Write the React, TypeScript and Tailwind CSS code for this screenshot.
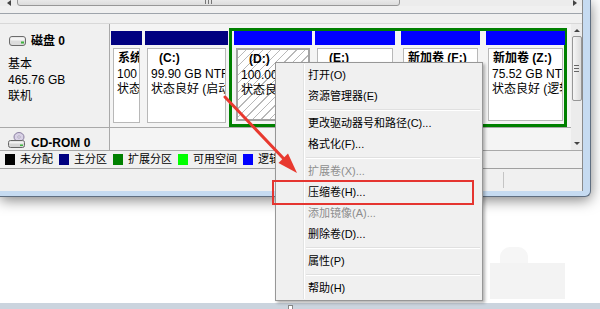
import React from 'react'

const FONT = "font-['Liberation_Sans','Noto_Sans_CJK_SC',sans-serif]"

function DiskIcon() {
  return (
    <svg width="17" height="10" viewBox="0 0 17 10">
      <rect x="0.5" y="0.5" width="16" height="9" rx="2.5" fill="#dcdcdc" stroke="#6b6b6b" />
      <rect x="1.5" y="1.5" width="14" height="3" rx="1" fill="#f4f4f4" />
      <rect x="12" y="5.5" width="3" height="2" fill="#3fb53f" />
    </svg>
  )
}

function CdIcon() {
  return (
    <svg width="18" height="16" viewBox="0 0 18 16">
      <ellipse cx="11" cy="5" rx="5" ry="4.5" fill="#d9d2e6" stroke="#8a7fa0" />
      <circle cx="11" cy="5" r="1.2" fill="#fff" stroke="#8a7fa0" strokeWidth="0.6" />
      <rect x="0.5" y="8.5" width="16" height="7" rx="2" fill="#d6d6d6" stroke="#666" />
      <rect x="1.5" y="9.5" width="14" height="2" fill="#f2f2f2" />
      <rect x="12" y="12.5" width="3" height="1.5" fill="#3fb53f" />
    </svg>
  )
}

type Part = {
  w: string
  header: string
  name: string
  size: string
  status: string
  hatched?: boolean
  indent?: boolean
}

function Partition({ p, inExtended }: { p: Part; inExtended?: boolean }) {
  return (
    <div className={`${p.w} ${inExtended ? '' : 'mt-[7px]'} flex flex-col`}>
      <div className={`h-[14px] ${p.header}`} />
      <div className="px-[2px] pt-[3px]">
        <div
          className={`${inExtended ? 'h-[73px]' : 'h-[75px]'} overflow-hidden whitespace-nowrap pl-[3px] pt-[2px] text-[12px] leading-[15.5px] text-black ${
            p.hatched
              ? 'border-2 border-[#a3a3a3] bg-[repeating-linear-gradient(135deg,#ffffff_0px,#ffffff_5px,#b9b9b9_5px,#b9b9b9_6px)]'
              : 'border border-[#b8b8b8] bg-white'
          }`}
        >
          <div className={`font-bold ${p.indent ? 'pl-[8px]' : 'pl-[1px]'}`}>{p.name}</div>
          <div>{p.size}</div>
          <div>{p.status}</div>
        </div>
      </div>
    </div>
  )
}

const logical: Part[] = [
  { w: 'w-[78px]', header: 'bg-[#0000ff]', name: '(D:)', size: '100.00 GB NTFS', status: '状态良好 (逻辑驱动器)', hatched: true, indent: true },
  { w: 'w-[80px]', header: 'bg-[#0000ff]', name: '(E:)', size: '100.00 GB NTFS', status: '状态良好 (逻辑驱动器)', indent: true },
  { w: 'w-[79px]', header: 'bg-[#0000ff]', name: '新加卷  (F:)', size: '90.34 GB NTFS', status: '状态良好 (逻辑驱动器)' },
  { w: 'w-[79px]', header: 'bg-[#0000ff]', name: '新加卷  (Z:)', size: '75.52 GB NTFS', status: '状态良好 (逻辑驱动器)' },
]

const legend = [
  { c: 'bg-black', t: '未分配' },
  { c: 'bg-[#000080]', t: '主分区' },
  { c: 'bg-[#008000]', t: '扩展分区' },
  { c: 'bg-[#00ff00]', t: '可用空间' },
  { c: 'bg-[#0000ff]', t: '逻辑驱动器' },
]

type MenuEntry = { t: string; off?: boolean } | 'sep'

const menu: MenuEntry[] = [
  { t: '打开(O)' },
  { t: '资源管理器(E)' },
  'sep',
  { t: '更改驱动器号和路径(C)...' },
  { t: '格式化(F)...' },
  'sep',
  { t: '扩展卷(X)...', off: true },
  { t: '压缩卷(H)...' },
  { t: '添加镜像(A)...', off: true },
  { t: '删除卷(D)...' },
  'sep',
  { t: '属性(P)' },
  'sep',
  { t: '帮助(H)' },
]

export default function App() {
  return (
    <div className={`relative h-[309px] w-[600px] overflow-hidden bg-white ${FONT}`}>
      {/* window */}
      <div className="h-[197px] w-[591px] rounded-br-[6px] border-r border-b border-[#5f6e80] bg-[#c6dbf1] pr-[6px] pb-[5px] shadow-[0_3px_14px_rgba(0,0,0,0.5)]">
        <div className="flex h-[191px] w-[583px] flex-col border-r border-[#8a8a8a] bg-[#f0f0f0]">
          {/* upper pane tail: horizontal scrollbar */}
          <div className="flex h-[6px] items-end overflow-hidden bg-[#ececec]">
            <div className="flex h-[6px] w-[17px] items-start justify-center">
              <div className="h-0 w-0 border-y-[3px] border-r-[4px] border-y-transparent border-r-[#444]" />
            </div>
            <div className="flex h-[12px] w-[383px] items-start justify-center gap-[2px] rounded-[3px] border border-[#979797] bg-[linear-gradient(#f6f6f6,#dcdcdc)] pt-[5px]">
              <div className="h-[4px] w-px bg-[#777]" />
              <div className="h-[4px] w-px bg-[#777]" />
              <div className="h-[4px] w-px bg-[#777]" />
            </div>
            <div className="flex-1" />
            <div className="flex h-[6px] w-[14px] items-start justify-center">
              <div className="h-0 w-0 border-y-[3px] border-l-[4px] border-y-transparent border-l-[#444]" />
            </div>
          </div>
          <div className="h-[7px]" />
          <div className="h-[10px] border-t border-[#9ea4ab]" />

          {/* graphical pane */}
          <div className="flex h-[127px] border-t border-[#d8d8d8]">
            <div className="flex w-[572px] flex-col bg-[#f4f4f4]">
              {/* disk 0 */}
              <div className="flex h-[105px] border-b border-[#a9a9a9]">
                <div className="w-[110px] border-r border-[#a9a9a9] bg-[#f0f0f0] pl-[8px] text-[12px] leading-[16px] text-black">
                  <div className="flex h-[32px] items-center gap-[5px] pt-[2px] pl-[1px]">
                    <DiskIcon />
                    <span className="font-bold">磁盘 0</span>
                  </div>
                  <div>基本</div>
                  <div>465.76 GB</div>
                  <div>联机</div>
                </div>
                <div className="flex items-start pl-px">
                  <Partition
                    p={{ w: 'w-[31px]', header: 'bg-[#000080]', name: '系统保留', size: '100 MB NTFS', status: '状态良好 (系统, 活动, 主分区)' }}
                  />
                  <div className="w-[3px]" />
                  <Partition
                    p={{ w: 'w-[83px]', header: 'bg-[#000080]', name: '(C:)', size: '99.90 GB NTFS', status: '状态良好 (启动, 页面文件, 故障转储, 主分区)', indent: true }}
                  />
                  <div className="w-px" />
                  <div className="mt-[4px] flex h-[99px] w-[338px] gap-[3px] border-[3px] border-[#008000] pl-[2px]">
                    <Partition p={logical[0]} inExtended />
                    <Partition p={logical[1]} inExtended />
                    <div className="w-px" />
                    <Partition p={logical[2]} inExtended />
                    <div className="w-[2px]" />
                    <Partition p={logical[3]} inExtended />
                  </div>
                </div>
              </div>
              {/* CD-ROM 0 */}
              <div className="flex flex-1">
                <div className="flex w-[110px] items-start gap-[5px] border-r border-[#a9a9a9] bg-[#f0f0f0] pt-[4px] pl-[8px]">
                  <CdIcon />
                  <span className="pt-[4px] text-[12px] leading-[14px] font-bold text-black">CD-ROM 0</span>
                </div>
                <div className="flex-1" />
              </div>
            </div>
            {/* vertical scrollbar */}
            <div className="flex w-[11px] flex-col items-center bg-[#ececec]">
              <div className="flex h-[12px] items-center">
                <div className="h-0 w-0 border-x-[3px] border-b-[3px] border-x-transparent border-b-[#444]" />
              </div>
              <div className="flex h-[65px] w-[10px] flex-col items-center justify-center gap-[2px] rounded-[2px] border border-[#979797] bg-[linear-gradient(90deg,#f6f6f6,#dcdcdc)]">
                <div className="h-px w-[5px] bg-[#666]" />
                <div className="h-px w-[5px] bg-[#666]" />
                <div className="h-px w-[5px] bg-[#666]" />
              </div>
              <div className="flex-1" />
              <div className="flex h-[14px] items-center">
                <div className="h-0 w-0 border-x-[3px] border-t-[3px] border-x-transparent border-t-[#444]" />
              </div>
            </div>
          </div>

          {/* legend */}
          <div className="flex h-[18px] items-center gap-[6px] border-t border-[#a9a9a9] bg-[#f0f0f0] pl-[5px] text-[11px] whitespace-nowrap text-black">
            {legend.map((l) => (
              <div key={l.t} className="flex items-center gap-[5px]">
                <span className={`h-[11px] w-[10px] ${l.c}`} />
                <span>{l.t}</span>
              </div>
            ))}
          </div>

          {/* status bar */}
          <div className="flex flex-1 border-t border-[#a0a0a0] bg-[#f0f0f0]">
            <div className="w-[503px]" />
            <div className="my-[3px] w-px bg-[#c4c4c4]" />
          </div>
        </div>
      </div>

      {/* faint watermark */}
      <div className="absolute top-[247px] left-[500px] h-[16px] w-[28px] rounded-t-[10px] bg-[#f6f6f6]" />
      <div className="absolute top-[263px] left-[490px] h-[36px] w-[75px] bg-[#f3f3f3]" />

      {/* lower window edge */}
      <div className="absolute right-0 bottom-0 left-0 h-[6px] bg-[#cbd4de]">
        <div className="absolute top-[2px] left-[288px] h-[5px] w-[5px] border border-[#888] bg-white" />
      </div>

      {/* context menu */}
      <div className="absolute top-[62px] left-[275px] h-[239px] w-[208px] border border-[#979797] bg-[#f0f0f0] py-[1px] shadow-[2px_2px_3px_rgba(0,0,0,0.3)]">
        <div className="absolute top-[1px] bottom-[1px] left-[27px] w-px bg-[#e2e3e3]" />
        <div className="absolute top-[1px] bottom-[1px] left-[28px] w-px bg-white" />
        <div className="relative flex flex-col pt-px text-[11px]">
          {menu.map((m, i) =>
            m === 'sep' ? (
              <div key={i} className="flex h-[6px] items-center pl-[30px] pr-[2px]">
                <div className="h-[2px] w-full border-t border-[#e0e0e0] bg-white" />
              </div>
            ) : (
              <div
                key={i}
                className={`flex h-[21px] items-center pl-[32px] whitespace-nowrap ${m.off ? 'text-[#8d8d8d]' : 'text-black'}`}
              >
                {m.t}
              </div>
            ),
          )}
        </div>
      </div>

      {/* red highlight box */}
      <div className="absolute top-[180px] left-[272px] h-[25px] w-[202px] border-2 border-[#e53530]" />

      {/* red arrow */}
      <svg className="pointer-events-none absolute top-0 left-0" width="600" height="309" viewBox="0 0 600 309">
        <line x1="225" y1="97" x2="284" y2="159" stroke="#e8392f" strokeWidth="3" strokeLinecap="round" />
        <polygon points="297,173 288,153.5 278.5,163" fill="#e8392f" />
      </svg>
    </div>
  )
}
